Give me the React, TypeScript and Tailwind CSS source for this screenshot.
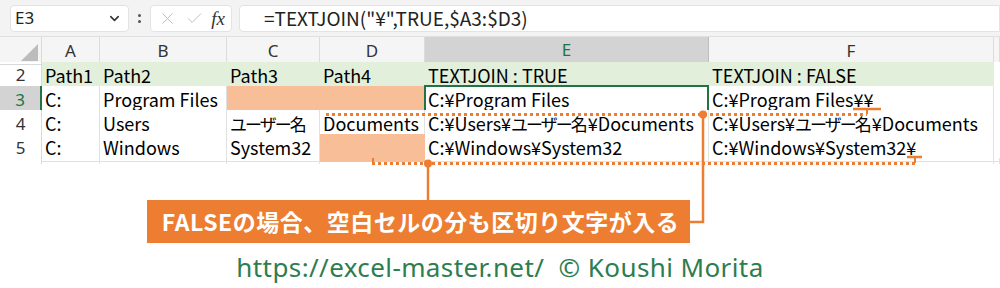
import { ChevronDown, X, Check } from 'lucide-react';

const cellFont = "font-['Noto_Sans_CJK_JP','Noto_Sans',sans-serif]";
const cols = 'grid grid-cols-[42px_58px_127px_93px_105px_284px_285px_1fr]';

type Cell = { text?: string; fill?: 'orange'; selected?: boolean };

const rows: { n: number; cells: Cell[]; header?: boolean; active?: boolean }[] = [
  {
    n: 2,
    header: true,
    cells: [
      { text: 'Path1' },
      { text: 'Path2' },
      { text: 'Path3' },
      { text: 'Path4' },
      { text: 'TEXTJOIN : TRUE' },
      { text: 'TEXTJOIN : FALSE' },
    ],
  },
  {
    n: 3,
    active: true,
    cells: [
      { text: 'C:' },
      { text: 'Program Files' },
      { fill: 'orange' },
      { fill: 'orange' },
      { text: 'C:¥Program Files', selected: true },
      { text: 'C:¥Program Files¥¥' },
    ],
  },
  {
    n: 4,
    cells: [
      { text: 'C:' },
      { text: 'Users' },
      { text: 'ユーザー名' },
      { text: 'Documents' },
      { text: 'C:¥Users¥ユーザー名¥Documents' },
      { text: 'C:¥Users¥ユーザー名¥Documents' },
    ],
  },
  {
    n: 5,
    cells: [
      { text: 'C:' },
      { text: 'Windows' },
      { text: 'System32' },
      { fill: 'orange' },
      { text: 'C:¥Windows¥System32' },
      { text: 'C:¥Windows¥System32¥' },
    ],
  },
];

// kana runs are set a little tighter, like the proportional kana in Excel
function CellText({ text }: { text: string }) {
  const parts = text.split(/([\u3040-\u30ff\u4e00-\u9fff]+)/);
  return (
    <>
      {parts.map((p, i) =>
        /[\u3040-\u30ff\u4e00-\u9fff]/.test(p) ? (
          <span key={i} className="text-[17px] tracking-[-2px] pr-[2px]">
            {p}
          </span>
        ) : (
          <span key={i}>{p}</span>
        )
      )}
    </>
  );
}

function FormulaBar() {
  return (
    <div className="h-[36px] bg-[#f3f3f3] flex items-center pl-[10px] gap-[7px]">
      <div className="w-[119px] h-[27px] bg-white border border-[#e3e3e3] rounded-[4px] flex items-center justify-between pl-[4px] pr-[6px]">
        <span className="text-[17px] text-[#222] font-['Noto_Sans',sans-serif]">E3</span>
        <ChevronDown size={15} strokeWidth={2.5} className="text-[#333]" />
      </div>
      <div className="flex flex-col gap-[3px] px-[2px]">
        <span className="w-[3px] h-[3px] bg-[#555] rounded-full" />
        <span className="w-[3px] h-[3px] bg-[#555] rounded-full" />
      </div>
      <div className="w-[82px] h-[27px] bg-white border border-[#e3e3e3] rounded-[4px] flex items-center justify-between pl-[7px] pr-[6px]">
        <X size={19} strokeWidth={1.2} className="text-[#bdbdbd]" />
        <Check size={19} strokeWidth={1.2} className="text-[#bdbdbd]" />
        <span className="font-['Liberation_Serif',serif] italic text-[19px] text-[#333] leading-none">fx</span>
      </div>
      <div className="flex-1 h-[27px] bg-white border border-[#e3e3e3] rounded-l-[4px] flex items-center pl-[24px]">
        <span className={`text-[19px] text-[#222] ${cellFont}`}>=TEXTJOIN("¥",TRUE,$A3:$D3)</span>
      </div>
    </div>
  );
}

function ColumnHeader() {
  const letters = ['A', 'B', 'C', 'D', 'E', 'F', ''];
  return (
    <div className={`${cols} h-[26px] bg-[#f5f5f5] border-t border-[#e0e0e0]`}>
      <div className="relative border-r border-b border-[#d9d9d9]">
        <div className="absolute right-[3px] bottom-[3px] w-0 h-0 border-l-[17px] border-l-transparent border-b-[17px] border-b-[#bcbcbc]" />
      </div>
      {letters.map((l, i) => (
        <div
          key={i}
          className={`flex items-center justify-center text-[17px] font-['Noto_Sans',sans-serif] border-r ${
            l === 'E'
              ? 'bg-[#d3d3d3] text-[#217346] border-b-[2px] border-b-[#217346] border-r-[#bfbfbf]'
              : 'text-[#333] border-b border-[#d9d9d9] border-r-[#dcdcdc]'
          }`}
        >
          {l}
        </div>
      ))}
    </div>
  );
}

function Sheet() {
  return (
    <div className="h-[128px] overflow-hidden">
      <ColumnHeader />
      {rows.map((r) => (
        <div key={r.n} className={`${cols} h-[24px]`}>
          <div
            className={`flex items-center justify-center text-[17px] font-['Noto_Sans',sans-serif] border-b ${
              r.active
                ? 'bg-[#d3d3d3] text-[#217346] border-r-[2px] border-r-[#217346] border-b-[#c8c8c8]'
                : 'bg-white text-[#333] border-r border-r-[#d9d9d9] border-b-[#e3e3e3]'
            }`}
          >
            {r.n}
          </div>
          {r.cells.map((c, i) => (
            <div
              key={i}
              className={`relative flex items-center pl-[3px] whitespace-nowrap overflow-visible text-[18px] text-black ${cellFont} ${
                r.header ? 'bg-[#e2efda] border-r border-r-[#e2efda]' : c.fill ? 'bg-[#f7be98] border-r border-r-[#f7be98] border-b border-b-[#f7be98]' : 'bg-white border-r border-b border-[#e1e1e1]'
              }`}
            >
              {c.text && <CellText text={c.text} />}
              {c.selected && (
                <>
                  <div className="absolute inset-[-1px] border-[2px] border-[#217346]" />
                  <div className="absolute right-[-4px] bottom-[-4px] w-[6px] h-[6px] bg-[#217346] border border-white" />
                </>
              )}
            </div>
          ))}
          <div className="bg-white border-b border-[#e1e1e1]" />
        </div>
      ))}
      <div className={`${cols} h-[24px]`}>
        <div className="bg-white border-r border-[#d9d9d9] flex justify-center text-[17px] text-[#333] font-['Noto_Sans',sans-serif] leading-[24px] pt-[3px]">6</div>
        {[0, 1, 2, 3, 4, 5, 6].map((i) => (
          <div key={i} className="border-r border-[#e1e1e1]" />
        ))}
      </div>
    </div>
  );
}

function Connectors() {
  const orange = '#ed7d31';
  return (
    <svg className="absolute inset-0 pointer-events-none" width={1000} height={288}>
      {/* row 3 -> row 4 marker */}
      <line x1={326} y1={114.5} x2={867} y2={114.5} stroke={orange} strokeWidth={3} strokeDasharray="3 3" />
      <line x1={853} y1={109} x2={881} y2={109} stroke={orange} strokeWidth={2.5} />
      <line x1={867} y1={109} x2={867} y2={114} stroke={orange} strokeWidth={2} />
      <circle cx={703} cy={114.5} r={4} fill={orange} />
      <polyline points="703,114 703,222 690,222" fill="none" stroke={orange} strokeWidth={2.5} />
      {/* row 5 -> row 6 marker */}
      <line x1={373} y1={158} x2={373} y2={163} stroke={orange} strokeWidth={2} />
      <line x1={372} y1={163.5} x2={916} y2={163.5} stroke={orange} strokeWidth={3} strokeDasharray="3 3" />
      <line x1={907} y1={157} x2={922} y2={157} stroke={orange} strokeWidth={2.5} />
      <line x1={915} y1={157} x2={915} y2={163} stroke={orange} strokeWidth={2} />
      <circle cx={428} cy={163.5} r={4} fill={orange} />
      <line x1={428} y1={163} x2={428} y2={201} stroke={orange} strokeWidth={2.5} />
    </svg>
  );
}

export default function App() {
  return (
    <div className="relative w-[1000px] h-[288px] bg-white overflow-hidden">
      <FormulaBar />
      <Sheet />
      <div className="mt-[36px] ml-[147px] w-[543px] h-[43px] bg-[#ed7d31] flex items-center justify-center">
        <span className="text-white text-[23px] font-bold tracking-[0.5px] whitespace-nowrap font-['Noto_Sans_CJK_JP',sans-serif] leading-none pl-[4px]">
          FALSEの場合、空白セルの分も区切り文字が入る
        </span>
      </div>
      <div className="mt-[11px] flex justify-center">
        <span className="text-[#2e7d4f] text-[26px] tracking-[0.4px] font-['Noto_Sans',sans-serif] leading-none whitespace-pre">
          https://excel-master.net/  © Koushi Morita
        </span>
      </div>
      <Connectors />
    </div>
  );
}
